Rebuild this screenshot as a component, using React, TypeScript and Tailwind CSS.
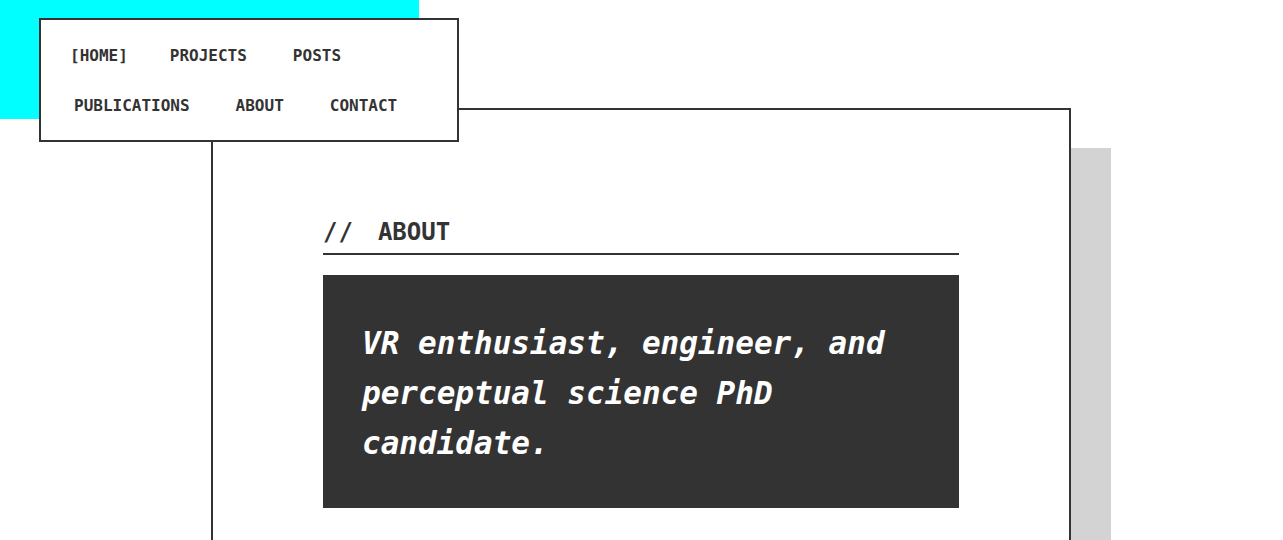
import React from "react";

const navRows = [
  [
    { label: "[HOME]", ml: "ml-[29px]" },
    { label: "PROJECTS", ml: "ml-[42px]" },
    { label: "POSTS", ml: "ml-[46px]" },
  ],
  [
    { label: "PUBLICATIONS", ml: "ml-[33px]" },
    { label: "ABOUT", ml: "ml-[46px]" },
    { label: "CONTACT", ml: "ml-[46px]" },
  ],
];

const mono = "font-['DejaVu_Sans_Mono','Liberation_Mono',monospace]";

export default function App() {
  return (
    <div className={`relative min-h-[540px] w-full overflow-hidden bg-white text-[#333] ${mono}`}>
      {/* cyan block behind the nav */}
      <div className="absolute left-0 top-0 h-[119px] w-[419px] bg-[#00ffff]" />

      {/* Nav box */}
      <nav className="absolute left-[39px] top-[18px] z-10 w-[420px] border-2 border-[#333] bg-white pt-[11px] pb-[9px]">
        {navRows.map((row, i) => (
          <div key={i} className="flex h-[50px] items-center">
            {row.map(({ label, ml }) => (
              <a
                key={label}
                href="#"
                className={`${ml} text-[16px] font-bold leading-none text-[#333]`}
              >
                {label}
              </a>
            ))}
          </div>
        ))}
      </nav>

      {/* Main card */}
      <main className="ml-[211px] mt-[108px] min-h-[600px] w-[860px] border-2 border-[#333] bg-white px-[110px] pt-[104px] shadow-[40px_40px_0_0_#d3d3d3]">
        <h2 className="flex border-b-2 border-[#333] pb-[3px] text-[24px] font-bold leading-[36px]">
          <span className="tracking-[1px]">//</span>
          <span className="ml-[24px]">ABOUT</span>
        </h2>
        <div className="mt-[20px] bg-[#333] pl-[39px] pr-[40px] pt-[43px] pb-[40px]">
          <p className="text-[31px] font-semibold italic leading-[50px] text-white">
            VR enthusiast, engineer, and perceptual science PhD candidate.
          </p>
        </div>
      </main>
    </div>
  );
}
